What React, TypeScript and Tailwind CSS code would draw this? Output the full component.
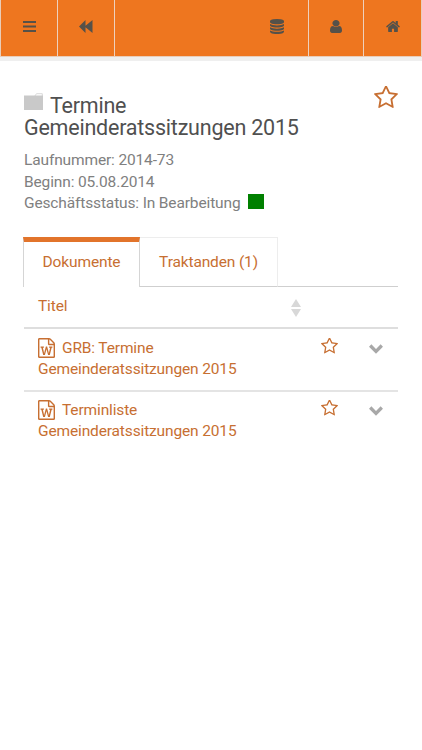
import React from 'react';

type IconProps = { className?: string };

const StarIcon = ({ className }: IconProps) => (
  <svg viewBox="0 128 1664 1536" className={className} fill="currentColor">
    <path d="M1137 1004l306-297-422-62-189-382-189 382-422 62 306 297-73 421 378-199 377 199zM1664 647q0 22-26 48l-363 354 86 500q1 7 1 20 0 50-41 50-19 0-40-12l-449-236-449 236q-22 12-40 12-21 0-31.500-14.500t-10.500-35.500q0-6 2-20l86-500-364-354q-25-27-25-48 0-37 56-46l502-73 225-455q19-41 49-41t49 41l225 455 502 73q56 9 56 46z" />
  </svg>
);

const WordIcon = () => (
  <svg viewBox="0 0 1536 1792" className="mr-[7px] inline-block h-5 w-[17px] align-[-5px]" fill="currentColor">
    <path d="M1468 380q28 28 48 76t20 88v1152q0 40-28 68t-68 28h-1344q-40 0-68-28t-28-68v-1600q0-40 28-68t68-28h896q40 0 88 20t76 48zM1024 136v376h376q-10-29-22-41l-313-313q-12-12-41-22zM1408 1664v-1024h-416q-40 0-68-28t-28-68v-416h-768v1536h1280zM233 768v107h70l164 661h159l128-485q7-20 10-46 2-16 2-24h4l3 24q1 3 3.500 20t5.500 26l128 485h159l164-661h70v-107h-300v107h90l-99 438q-5 20-7 46l-2 21h-4l-3-21q-1-5-4-21t-5-25l-144-545h-114l-144 545q-2 9-4.500 24.500t-3.500 21.500l-4 21h-4l-2-21q-2-26-7-46l-99-438h90v-107h-300z" />
  </svg>
);

const MenuIcon = () => (
  <svg viewBox="0 0 13 11" className="h-[11px] w-[13px]" fill="currentColor">
    <path d="M0 0h13v2H0zM0 4.500h13v2H0zM0 9h13v2H0z" />
  </svg>
);

const BackwardIcon = () => (
  <svg viewBox="0 0 14 13" className="h-[13px] w-[14px]" fill="currentColor">
    <path d="M0 6.500L6.500 0v5.800L13.500 0v13L6.500 7.200V13z" />
  </svg>
);

const DatabaseIcon = () => (
  <svg viewBox="0 0 1536 1792" className="h-[15px] w-[14px]" preserveAspectRatio="none" fill="currentColor">
    <path d="M768 768q237 0 443-43t325-127v170q0 69-103 128t-280 93.500-385 34.500-385-34.500-280-93.500-103-128v-170q119 84 325 127t443 43zm0 768q237 0 443-43t325-127v170q0 69-103 128t-280 93.500-385 34.500-385-34.500-280-93.500-103-128v-170q119 84 325 127t443 43zm0-384q237 0 443-43t325-127v170q0 69-103 128t-280 93.500-385 34.500-385-34.500-280-93.500-103-128v-170q119 84 325 127t443 43zm0-1152q208 0 385 34.500t280 93.500 103 128v128q0 69-103 128t-280 93.500-385 34.500-385-34.500-280-93.500-103-128v-128q0-69 103-128t280-93.500 385-34.500z" />
  </svg>
);

const UserIcon = () => (
  <svg viewBox="0 128 1280 1536" className="h-[13px] w-3" preserveAspectRatio="none" fill="currentColor">
    <path d="M1280 1399q0 109-62.500 187t-150.500 78h-854q-88 0-150.500-78t-62.500-187q0-85 8.500-160.500t31.500-152 58.500-131 94-89 134.500-34.500q131 128 313 128t313-128q76 0 134.500 34.500t94 89 58.500 131 31.500 152 8.500 160.500zm-256-887q0 159-112.500 271.500t-271.500 112.500-271.500-112.500-112.500-271.500 112.500-271.500 271.500-112.500 271.500 112.500 112.500 271.500z" />
  </svg>
);

const HomeIcon = () => (
  <svg viewBox="0 253 1664 1283" className="h-[11px] w-[14px]" preserveAspectRatio="none" fill="currentColor">
    <path d="M1408 992v480q0 26-19 45t-45 19h-384v-384h-256v384h-384q-26 0-45-19t-19-45v-480q0-1 .5-3t.5-3l575-474 575 474q1 2 1 6zm223-69l-62 74q-8 9-21 11h-3q-13 0-21-7l-692-577-692 577q-12 8-24 7-13-2-21-11l-62-74q-8-10-7-23.500t11-21.500l719-599q32-26 76-26t76 26l244 204v-195q0-14 9-23t23-9h192q14 0 23 9t9 23v408l219 182q10 8 11 21.500t-1 23.500z" />
  </svg>
);

const FolderIcon = () => (
  <svg viewBox="0 0 19 18" className="-mt-[6px] mr-[7px] inline-block h-[18px] w-[19px] align-[2px]">
    <path d="M10.500 3.500L12.500.7h5.800v3" fill="none" stroke="#cfcfcf" strokeWidth=".8" />
    <path d="M0 2.500h19V17H0z" fill="#c9c9c9" />
  </svg>
);

const ChevronIcon = () => (
  <svg viewBox="0 0 14 10" className="h-[10px] w-[14px]" fill="none" stroke="currentColor" strokeWidth="3.300">
    <path d="M1.200 1.500L7 7.300l5.800-5.800" />
  </svg>
);

const DocumentRow = ({ name }: { name: string }) => (
  <li className="flex h-[63px] border-b-2 border-[#e4e4e4] text-[#c76f32] last:-mt-px last:border-b-0">
    <a className="w-[291px] pt-[9px] pl-[14px] leading-[21px]">
      <WordIcon />
      {name}
      <br />
      Gemeinderatssitzungen 2015
    </a>
    <StarIcon className="mt-[9px] ml-[6px] h-4 w-[17px]" />
    <span className="mt-[15px] ml-[31px] text-[#a8a8a8]">
      <ChevronIcon />
    </span>
  </li>
);

export default function App() {
  return (
    <div className="h-[750px] w-[422px] overflow-hidden bg-white font-['Roboto',sans-serif] text-[15.500px] tracking-[-0.14px] text-[#808080]">
      <header className="flex h-[61px] border-b-4 border-[#efefef] text-[#555149]">
        <nav className="flex h-[57px] w-full border-x border-b border-[#e9cdb9] bg-[#ee761f]">
          <a className="flex w-[57px] items-center justify-center border-r border-[#eed1bd] pb-[3px]"><MenuIcon /></a>
          <a className="flex w-[57px] items-center justify-center border-r border-[#eed1bd] pb-[3px]"><BackwardIcon /></a>
          <a className="ml-auto flex w-[64px] items-center justify-center border-r border-[#eed1bd] pb-[3px]"><DatabaseIcon /></a>
          <a className="flex w-[55px] items-center justify-center border-r border-[#eed1bd] pb-[3px]"><UserIcon /></a>
          <a className="flex w-[57px] items-center justify-center pb-[3px]"><HomeIcon /></a>
        </nav>
      </header>

      <main className="px-6">
        <div className="flex justify-between pt-[34px]">
          <h1 className="w-[300px] text-[21.500px] leading-[22px] tracking-[-0.22px] text-[#505050]">
            <FolderIcon />
            Termine
            <br />
            Gemeinderatssitzungen 2015
          </h1>
          <StarIcon className="-mt-[9px] h-[23px] w-6 text-[#c76f32]" />
        </div>

        <div className="mt-[11px] leading-[21.500px]">
          <p>Laufnummer: 2014-73</p>
          <p>Beginn: 05.08.2014</p>
          <p className="flex">
            Geschäftsstatus: In Bearbeitung
            <span className="mt-px ml-2 h-[15px] w-4 bg-[#008000]" />
          </p>
        </div>

        <div className="-ml-px mt-[22px] flex h-[50px] text-[#c76f32]">
          <a className="flex w-[117px] justify-center border-x border-t-[5px] border-x-[#d5d5d5] border-t-[#e2742b] pt-[9px]">Dokumente</a>
          <a className="flex w-[138px] justify-center border-t border-r border-b border-[#ededed] border-b-[#cfcfcf] pt-[13px]">Traktanden (1)</a>
          <span className="flex-1 border-b border-[#cfcfcf]" />
        </div>

        <div className="flex h-[42px] border-b-2 border-[#dedede] pt-[8px] pl-[14px] text-[#c76f32]">
          <span className="w-[253px]">Titel</span>
          <svg viewBox="0 0 10 18" className="mt-[4px] h-[18px] w-[10px]" fill="#d8d8d8">
            <path d="M5 0l5 8H0zM5 18l5-8H0z" />
          </svg>
        </div>

        <ul>
          <DocumentRow name="GRB: Termine" />
          <DocumentRow name="Terminliste" />
        </ul>
      </main>
    </div>
  );
}
